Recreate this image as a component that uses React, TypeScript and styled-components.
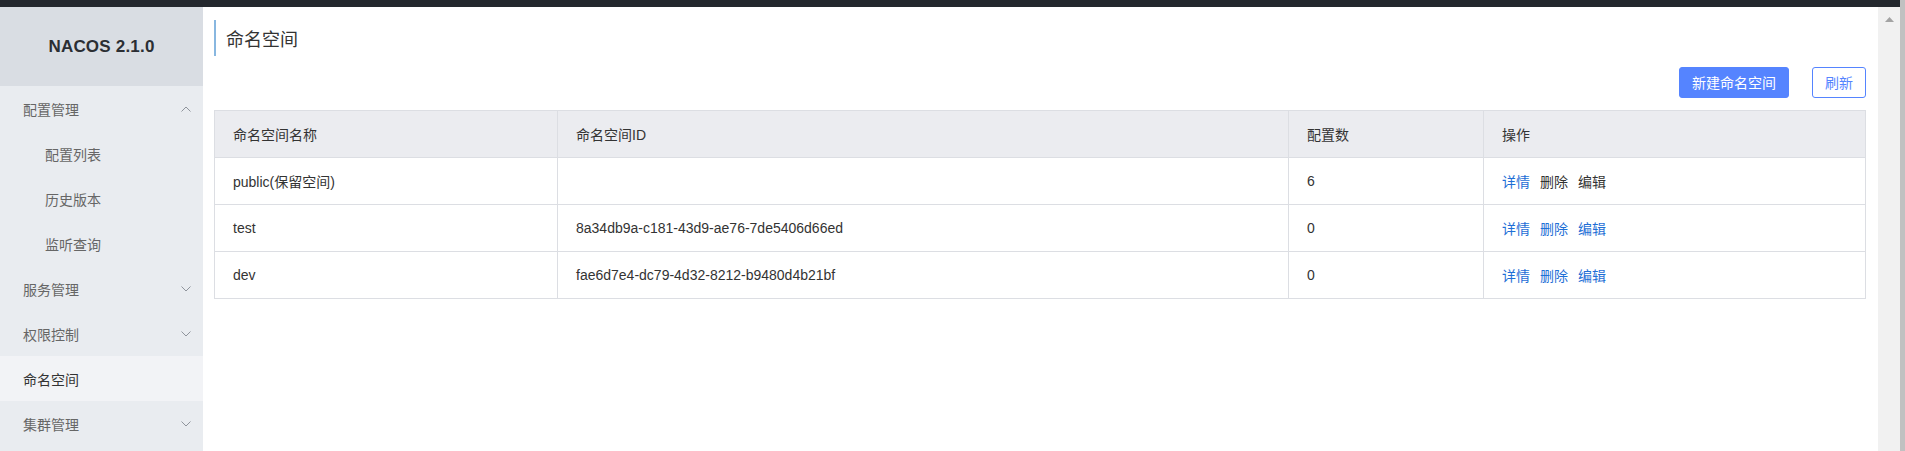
import React from "react";
import styled, { createGlobalStyle } from "styled-components";

const Global = createGlobalStyle`
  html, body { margin: 0; padding: 0; background: #fff; overflow: hidden; }
  * { box-sizing: border-box; }
  body { font-family: "Liberation Sans", "Noto Sans CJK SC", sans-serif; font-size: 14px; color: #333; }
`;

const Root = styled.div`
  display: flex;
  height: 451px;
  width: 1905px;
`;

const Frame = styled.div`
  flex: 1;
  display: flex;
  flex-direction: column;
  min-width: 0;
`;

const TopBar = styled.div`
  height: 7px;
  background: #24282e;
`;

const Body = styled.div`
  flex: 1;
  display: flex;
  min-height: 0;
`;

const Sidebar = styled.nav`
  width: 203px;
  flex-shrink: 0;
  background: #e9ecf0;
  display: flex;
  flex-direction: column;
`;

const Logo = styled.div`
  height: 79px;
  background: #d9dde3;
  display: flex;
  align-items: center;
  justify-content: center;
  font-family: "Liberation Sans", sans-serif;
  font-weight: bold;
  font-size: 17px;
  color: #2b2e33;
  letter-spacing: 0.2px;
`;

const MenuItem = styled.div<{ $sub?: boolean; $active?: boolean }>`
  height: 45px;
  display: flex;
  align-items: center;
  justify-content: space-between;
  padding: 0 12px 0 ${(p) => (p.$sub ? "45px" : "23px")};
  font-size: 14px;
  color: ${(p) => (p.$active ? "#333" : "#666")};
  background: ${(p) => (p.$active ? "#f2f3f6" : "transparent")};
  font-family: "Noto Sans CJK SC", sans-serif;
`;

const Main = styled.main`
  flex: 1;
  min-width: 0;
  padding: 13px 12px 0 11px;
  display: flex;
  flex-direction: column;
`;

const PageTitle = styled.h1`
  margin: 0;
  height: 36px;
  line-height: 36px;
  border-left: 2px solid #88b7e0;
  padding-left: 10px;
  font-size: 18px;
  font-weight: normal;
  color: #333;
  font-family: "Noto Sans CJK SC", sans-serif;
`;

const Toolbar = styled.div`
  display: flex;
  justify-content: flex-end;
  gap: 23px;
  margin: 11px 0 12px;
`;

const Button = styled.button<{ $primary?: boolean }>`
  height: 31px;
  padding: 0 12px;
  border-radius: 3px;
  font-size: 14px;
  font-family: "Noto Sans CJK SC", sans-serif;
  border: 1px solid #5584ff;
  background: ${(p) => (p.$primary ? "#5584ff" : "#fff")};
  color: ${(p) => (p.$primary ? "#fff" : "#5584ff")};
  cursor: pointer;
  line-height: 29px;
`;

const Table = styled.div`
  border: 1px solid #dcdee3;
  border-bottom: none;
  display: grid;
  grid-template-columns: 343px 731px 195px 1fr;
`;

const Cell = styled.div<{ $head?: boolean; $last?: boolean }>`
  height: 47px;
  display: flex;
  align-items: center;
  padding-left: 18px;
  border-bottom: 1px solid #dcdee3;
  border-right: ${(p) => (p.$last ? "none" : "1px solid #dcdee3")};
  background: ${(p) => (p.$head ? "#ebecf0" : "#fff")};
  color: #333;
  font-size: 14px;
  gap: 10px;
  white-space: nowrap;
`;

const Action = styled.span<{ $link?: boolean }>`
  color: ${(p) => (p.$link ? "#1f6fd6" : "#333")};
  font-family: "Noto Sans CJK SC", sans-serif;
  cursor: pointer;
`;

const ScrollTrack = styled.div`
  width: 22px;
  flex-shrink: 0;
  background: #f1f1f1;
  display: flex;
  justify-content: center;
  padding-top: 10px;
`;

const OuterThumb = styled.div`
  width: 5px;
  background: #c1c1c1;
`;

const Chevron = ({ up }: { up?: boolean }) => (
  <svg width="10" height="6" viewBox="0 0 10 6" aria-hidden>
    <polyline
      points={up ? "0.5,5.5 5,1 9.5,5.5" : "0.5,0.5 5,5 9.5,0.5"}
      fill="none"
      stroke="#8f949c"
      strokeWidth="1"
    />
  </svg>
);

const ArrowUp = () => (
  <svg width="9" height="5" viewBox="0 0 9 5" aria-hidden>
    <polygon points="0,5 4.5,0 9,5" fill="#a3a3a3" />
  </svg>
);

type Row = { name: string; id: string; count: string; editable: boolean };

const rows: Row[] = [
  { name: "public(保留空间)", id: "", count: "6", editable: false },
  { name: "test", id: "8a34db9a-c181-43d9-ae76-7de5406d66ed", count: "0", editable: true },
  { name: "dev", id: "fae6d7e4-dc79-4d32-8212-b9480d4b21bf", count: "0", editable: true },
];

export default function App() {
  return (
    <>
      <Global />
      <Root>
        <Frame>
          <TopBar />
          <Body>
            <Sidebar>
              <Logo>NACOS 2.1.0</Logo>
              <MenuItem>
                配置管理 <Chevron up />
              </MenuItem>
              <MenuItem $sub>配置列表</MenuItem>
              <MenuItem $sub>历史版本</MenuItem>
              <MenuItem $sub>监听查询</MenuItem>
              <MenuItem>
                服务管理 <Chevron />
              </MenuItem>
              <MenuItem>
                权限控制 <Chevron />
              </MenuItem>
              <MenuItem $active>命名空间</MenuItem>
              <MenuItem>
                集群管理 <Chevron />
              </MenuItem>
            </Sidebar>
            <Main>
              <PageTitle>命名空间</PageTitle>
              <Toolbar>
                <Button $primary>新建命名空间</Button>
                <Button>刷新</Button>
              </Toolbar>
              <Table>
                <Cell $head>命名空间名称</Cell>
                <Cell $head>命名空间ID</Cell>
                <Cell $head>配置数</Cell>
                <Cell $head $last>操作</Cell>
                {rows.map((r) => (
                  <React.Fragment key={r.name}>
                    <Cell>{r.name}</Cell>
                    <Cell>{r.id}</Cell>
                    <Cell>{r.count}</Cell>
                    <Cell $last>
                      <Action $link>详情</Action>
                      <Action $link={r.editable}>删除</Action>
                      <Action $link={r.editable}>编辑</Action>
                    </Cell>
                  </React.Fragment>
                ))}
              </Table>
            </Main>
            <ScrollTrack>
              <ArrowUp />
            </ScrollTrack>
          </Body>
        </Frame>
        <OuterThumb />
      </Root>
    </>
  );
}
